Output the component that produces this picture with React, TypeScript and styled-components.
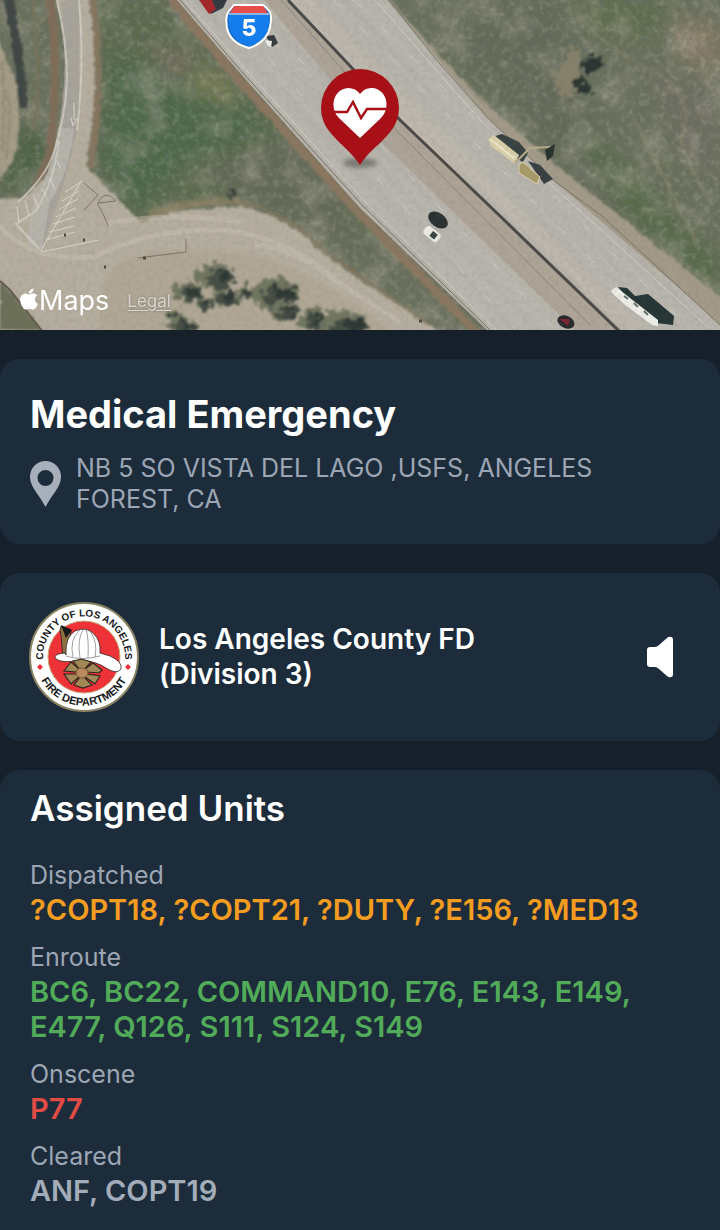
import React from "react";
import styled, { createGlobalStyle } from "styled-components";
import { FaApple } from "react-icons/fa";

const GlobalStyle = createGlobalStyle`
  *, *::before, *::after { box-sizing: border-box; }
  body {
    margin: 0;
    background: #15202b;
    color: #ffffff;
    font-family: Inter, "Liberation Sans", sans-serif;
  }
`;

const Page = styled.main`
  display: flex;
  flex-direction: column;
  min-height: 100vh;
`;

const MapPanel = styled.section`
  position: relative;
  height: 330px;
  margin-bottom: 29px;
  overflow: hidden;
`;

const MapArt = styled.svg`
  display: block;
  width: 100%;
  height: 100%;
`;

const Attribution = styled.div`
  position: absolute;
  left: 19px;
  bottom: 14px;
  display: flex;
  align-items: center;
  gap: 18px;
  line-height: 30px;
`;

const MapsBrand = styled.span`
  display: flex;
  align-items: center;
  font-size: 27px;

  svg {
    width: 20px;
    height: 24px;
    margin-bottom: 4px;
  }
`;

const LegalLink = styled.a`
  color: #dad6cf;
  font-size: 17px;
  text-shadow: 0 0 2px #6c6860;
  text-underline-offset: 3px;
`;

const Cards = styled.div`
  display: flex;
  flex: 1;
  flex-direction: column;
  gap: 29px;
`;

const Card = styled.section`
  padding: 31px 30px 29px;
  border-radius: 20px;
  background: #1c2c3b;
`;

const AgencyCard = styled(Card)`
  display: flex;
  align-items: center;
  gap: 20px;
  padding: 29px;
`;

const UnitsCard = styled(Card)`
  flex: 1;
  padding: 17px 30px 19px;
  border-radius: 20px 20px 0 0;
`;

const Title = styled.h1`
  margin: 0 0 15px;
  font-size: 38px;
  font-weight: 700;
  line-height: 48px;
`;

const Address = styled.div`
  display: flex;
  align-items: center;
  gap: 15px;
  color: #9ca6b4;
  font-size: 25px;
  font-weight: 400;
  line-height: 31px;

  svg {
    flex: none;
  }
`;

const Badge = styled.svg`
  flex: none;
  width: 110px;
  height: 110px;
`;

const AgencyName = styled.h2`
  flex: 1;
  max-width: 380px;
  margin: 0;
  font-size: 28px;
  font-weight: 600;
  line-height: 35px;
`;

const SoundButton = styled.button`
  display: flex;
  margin: 0 17px 0 auto;
  padding: 0;
  border: 0;
  background: none;
  color: #ffffff;
`;

const UnitsTitle = styled.h2`
  margin: 0 0 29px;
  font-size: 35px;
  font-weight: 600;
  line-height: 42px;
`;

const Groups = styled.dl`
  display: flex;
  flex-direction: column;
  gap: 13px;
  margin: 0;
`;

const StatusLabel = styled.dt`
  color: #9ca6b4;
  font-size: 25px;
  line-height: 34px;
`;

const UnitList = styled.dd<{ $color: string }>`
  margin: 0;
  color: ${({ $color }) => $color};
  font-size: 29px;
  font-weight: 600;
  line-height: 35px;
`;

const groups = [
  { status: "Dispatched", color: "#f59d20", units: "?COPT18, ?COPT21, ?DUTY, ?E156, ?MED13" },
  { status: "Enroute", color: "#51ab58", units: "BC6, BC22, COMMAND10, E76, E143, E149, E477, Q126, S111, S124, S149" },
  { status: "Onscene", color: "#e34b45", units: "P77" },
  { status: "Cleared", color: "#a3acb9", units: "ANF, COPT19" },
];

const Bush = ({ x, y, r }: { x: number; y: number; r: number }) => (
  <g>
    <ellipse cx={x} cy={y} rx={r} ry={r * 0.7} fill="#717660" />
    <ellipse cx={x + r * 0.2} cy={y + r * 0.1} rx={r * 0.75} ry={r * 0.5} fill="#444d44" />
    <ellipse cx={x + r * 0.4} cy={y - r * 0.1} rx={r * 0.4} ry={r * 0.3} fill="#2e3836" />
  </g>
);

function SatelliteMap() {
  return (
    <MapArt viewBox="0 0 720 330" preserveAspectRatio="xMidYMid slice" role="img" aria-label="Satellite map of Interstate 5">
      <defs>
        <filter id="rough" x="0" y="0" width="100%" height="100%">
          <feTurbulence type="fractalNoise" baseFrequency="0.16" numOctaves="3" seed="4" result="n" />
          <feDisplacementMap in="SourceGraphic" in2="n" scale="6" xChannelSelector="R" yChannelSelector="G" />
          <feGaussianBlur stdDeviation="0.8" />
        </filter>
        <filter id="foliage" x="-10%" y="-10%" width="120%" height="120%">
          <feTurbulence type="fractalNoise" baseFrequency="0.14" numOctaves="3" seed="9" result="n" />
          <feDisplacementMap in="SourceGraphic" in2="n" scale="18" xChannelSelector="R" yChannelSelector="G" />
          <feGaussianBlur stdDeviation="0.8" />
        </filter>
        <filter id="soft" x="-10%" y="-10%" width="120%" height="120%"><feGaussianBlur stdDeviation="9" /></filter>
        <filter id="edge" x="-10%" y="-10%" width="120%" height="120%"><feGaussianBlur stdDeviation="0.6" /></filter>
        <filter id="shade" x="-50%" y="-50%" width="200%" height="200%"><feGaussianBlur stdDeviation="2" /></filter>
        <filter id="grain" x="0" y="0" width="100%" height="100%">
          <feTurbulence type="fractalNoise" baseFrequency="0.22" numOctaves="3" seed="8" />
          <feColorMatrix type="matrix" values="0 0 0 0 0.14  0 0 0 0 0.16  0 0 0 0 0.14  2.2 0 0 0 -0.95" />
        </filter>
        <filter id="light" x="0" y="0" width="100%" height="100%">
          <feTurbulence type="fractalNoise" baseFrequency="0.15" numOctaves="3" seed="23" />
          <feColorMatrix type="matrix" values="0 0 0 0 0.75  0 0 0 0 0.74  0 0 0 0 0.6  0 2.2 0 0 -1.05" />
        </filter>
        <filter id="patches" x="0" y="0" width="100%" height="100%">
          <feTurbulence type="fractalNoise" baseFrequency="0.03" numOctaves="4" seed="12" />
          <feColorMatrix type="matrix" values="0 0 0 0 0.5  0 0 0 0 0.44  0 0 0 0 0.37  3 0 0 0 -1.4" />
        </filter>
        <filter id="streaks" x="0" y="0" width="100%" height="100%">
          <feTurbulence type="fractalNoise" baseFrequency="0.004 0.1" numOctaves="3" seed="5" />
          <feColorMatrix type="matrix" values="0 0 0 0 0.4  0 0 0 0 0.38  0 0 0 0 0.35  2 0 0 0 -0.85" />
        </filter>
        <clipPath id="freewayClip"><path d="M177 0H390L487 117L553 180L693 300L720 325V330H487L360 208L240 73Z" /></clipPath>
      </defs>

      <rect width="720" height="330" fill="#69705b" />
      <g filter="url(#soft)">
        <path d="M95 0H160L290 140L330 230L240 200L140 220L95 165Z" fill="#5b6b4d" />
        <path d="M110 60L220 75L270 130L190 165L130 215L100 160Z" fill="#4e6848" />
        <path d="M150 45L195 55L175 85Z" fill="#756c5d" />
        <path d="M180 70L225 75L240 105L200 95Z" fill="#7a7e55" />
        <path d="M200 170L290 140L390 270L340 240Z" fill="#646957" />
        <path d="M24 120L50 140L30 190H0Z" fill="#4c6242" />
        <path d="M430 0L560 0L600 150L700 240V290L560 160L470 70Z" fill="#636b58" />
        <path d="M560 0H680L650 40L590 30Z" fill="#5f6d4e" />
        <path d="M670 20H720V80L680 60Z" fill="#857a66" />
        <path d="M640 60L720 90V190L680 150Z" fill="#6e6e60" />
        <path d="M560 110L640 180L720 260V310L620 210Z" fill="#566a4a" />
      </g>
      <rect width="720" height="330" filter="url(#patches)" opacity="0.35" />
      <rect width="720" height="330" filter="url(#grain)" opacity="0.55" />
      <rect width="720" height="330" filter="url(#light)" opacity="0.22" />
      <path d="M575 10Q600 45 650 70T680 140Q690 165 705 195M630 110Q670 190 700 250" fill="none" stroke="#9a9177" strokeWidth="2" opacity=".5" filter="url(#rough)" />

      <g filter="url(#rough)">
        <path d="M-4 30L4 55L16 80L20 125L14 160L-4 185Z" fill="#a59c87" />
        <path d="M8 90Q12 120 6 160M2 60Q6 100 2 150" fill="none" stroke="#8f8672" strokeWidth="2" />
        <path d="M8 -4L14 30L20 70L24 108" fill="none" stroke="#3f4644" strokeWidth="9" />
        <path d="M32 -4Q42 80 34 130" fill="none" stroke="#77735c" strokeWidth="3" />
        <path d="M50 -4Q60 72 50 155L36 186" fill="none" stroke="#7f6d59" strokeWidth="8" />
        <path d="M92 -4Q103 80 91 168" fill="none" stroke="#857660" strokeWidth="8" />
        <path d="M-4 199L22 198Q52 180 60 136Q72 58 56 -4H88Q102 75 86 165L140 222Q174 207 240 207Q286 214 322 253L360 280L446 336H-4Z" fill="#b5ad9e" />
        <path d="M102 334Q88 278 130 257Q235 237 303 274L360 306L394 334Z" fill="#b1a796" />
        <path d="M140 220Q183 201 245 203Q292 216 328 254L388 296L430 326" fill="none" stroke="#8b7b61" strokeWidth="3" opacity=".7" />
        <path d="M150 214Q190 200 240 200" fill="none" stroke="#96886a" strokeWidth="8" opacity=".5" />
      </g>
      <g filter="url(#edge)">
        <path d="M70 0Q83 90 54 185L33 247" fill="none" stroke="#a5a39b" strokeWidth="18" opacity=".8" />
        <path d="M66 128Q62 170 42 200L34 247" fill="none" stroke="#c0bdb5" strokeWidth="16" opacity=".6" />
      </g>
      <path d="M57 0C72 65 69 105 54 152Q46 177 18 202M79 0Q85 65 77 130M59 141Q54 181 36 211L16 224L40 250" fill="none" stroke="#d2cec5" strokeWidth="2" opacity=".8" />
      <path d="M74 103V120M71 118L73 126L77 118M41 252L99 240M40 252L82 180M65 192L81 182M62 201L79 191M59 209L78 199M56 217L76 208M53 224L75 217M49 232L74 226M46 240L75 232M17 207L19 222M25 200L29 215M33 194L38 207M42 188L47 199M50 178L55 190M57 160L60 168" fill="none" stroke="#dad6ce" strokeWidth="1" />
      <g filter="url(#edge)">
        <path d="M0 226Q30 262 95 257Q145 229 220 230Q285 235 340 283M105 224Q168 211 240 222M255 244Q300 252 330 277L400 322" fill="none" stroke="#cbc3b5" strokeWidth="5" opacity=".4" />
        <path d="M84 183L98 195L84 210M97 203L104 216L108 226M138 258L186 252V239M98 203Q105 188 116 201L98 203" fill="none" stroke="#7c7469" strokeWidth="1" />
      </g>
      <path d="M83 240h2M104 267h2M143 258h3M64 235h2M419 321h3" stroke="#4d4741" strokeWidth="3" />
      <path d="M0 282L12 293L42 330H0Z" fill="#6c7058" filter="url(#rough)" />
      <path d="M0 281L10 290L42 331" fill="none" stroke="#615c50" strokeWidth="2" />

      <path d="M387 -2L480 98L556 165L650 240L724 300V330H690L553 185L485 120L378 0Z" fill="#a39a89" filter="url(#rough)" />
      <path d="M169 -4L240 81L360 214L480 336" fill="none" stroke="#8b7760" strokeWidth="9" filter="url(#rough)" />
      <path d="M177 0H387L487 117L553 180L693 300L720 325V330H487L360 208L240 73Z" fill="#b9b6ae" />
      <path d="M264 0H288L400 120L622 330H575L386 147Z" fill="#aea497" />
      <path d="M290 0H315L490 180L650 330H626L400 119Z" fill="#beb8ae" />
      <g clipPath="url(#freewayClip)">
        <rect x="0" y="-350" width="900" height="600" transform="rotate(46 200 0)" filter="url(#streaks)" opacity=".4" />
      </g>
      <g filter="url(#edge)">
        <path d="M288 0L352 68L400 120L500 216L620 332" fill="none" stroke="#4b4a47" strokeWidth="3" />
        <path d="M281 0L350 78L400 134L590 325" fill="none" stroke="#8d867c" strokeWidth="1" />
        <path d="M180 0L243 73L363 206L490 330M389 0L434 57L487 117L553 180L602 216L693 300L720 325" fill="none" stroke="#7a7365" strokeWidth="1" />
        <path d="M184 0L247 71L367 204L496 330M375 0L480 120L710 329" fill="none" stroke="#d0ccc4" strokeWidth="1" />
      </g>
      <path d="M215 0L515 329M243 0L555 329M333 0L660 329M354 0L690 329" fill="none" stroke="#dedbd4" strokeWidth="1" strokeDasharray="10 30" opacity=".6" />

      <g filter="url(#edge)">
        <path d="M206 0L211 14L223 8L227 0Z" fill="#303b43" /><path d="M199 0L209 14L216 9L212 0Z" fill="#a3252b" />
        <path d="M266 36L274 35L278 43L272 47Z" fill="#353b3c" /><path d="M265 40L272 41L271 47L267 45Z" fill="#ecece8" />
        <ellipse cx="438" cy="220" rx="11" ry="7" transform="rotate(35 438 220)" fill="#293333" />
        <g transform="translate(432 234) rotate(38)"><rect x="-9" y="-5" width="18" height="10" rx="4" fill="#ecebe5" /><path d="M-1 -3L5 -3V3L-1 3Z" fill="#38443f" /></g>
        <path d="M495 136L502 134L519 142L528 153L523 162L511 156Z" fill="#394343" />
        <path d="M528 161L540 165L553 179L544 184Z" fill="#374043" />
        <path d="M488 139L494 135L519 155L515 164L491 146Z" fill="#d8cfaa" /><path d="M490 139L515 159" stroke="#eee5c8" strokeWidth="2" />
        <path d="M519 165L523 162L540 177L537 184L519 173Z" fill="#a79b67" stroke="#ddd2ab" strokeWidth="1" />
        <path d="M515 163L530 148L551 147" stroke="#b7ac8b" strokeWidth="2" fill="none" /><path d="M545 150L555 144L553 156L547 161Z" fill="#29312e" />
        <path d="M618 287L627 288L635 296L648 294L674 316L673 325L656 323L632 303Z" fill="#273436" />
        <path d="M612 290L616 287L658 320L658 326L652 325L624 304L611 292Z" fill="#eeeee8" /><path d="M624 296L628 299M634 303L638 307M644 311L648 315" stroke="#626f69" strokeWidth="2" />
        <ellipse cx="566" cy="322" rx="9" ry="6" transform="rotate(25 566 322)" fill="#29292d" /><path d="M559 319L570 319L568 326Z" fill="#7a2632" />
      </g>
      <g filter="url(#foliage)">
        <path d="M568 52Q574 44 582 54L579 75L571 97L556 91L554 77Z" fill="#85816a" />
        <path d="M583 58L603 56L604 64L595 73L582 71ZM574 84L582 77L592 90L590 94L575 94Z" fill="#2b3432" />
        <Bush x={188} y={292} r={15} /><Bush x={216} y={277} r={19} /><Bush x={224} y={298} r={13} />
        <Bush x={244} y={293} r={9} /><Bush x={275} y={295} r={24} /><Bush x={285} y={311} r={14} />
        <Bush x={314} y={320} r={16} /><Bush x={345} y={327} r={24} /><Bush x={182} y={326} r={14} />
        <Bush x={173} y={315} r={7} /><Bush x={205} y={304} r={10} /><Bush x={231} y={193} r={8} />
      </g>
      <rect width="720" height="330" filter="url(#grain)" opacity="0.12" />

      <path d="M234 5H263Q266 7 270 12Q272 17 270 27Q267 42 249 48Q230 43 227 28Q225 16 229 11Z" fill="#176cc5" stroke="#fff" strokeWidth="2" />
      <path d="M234 6H263L268 13H230Z" fill="#e74d4a" />
      <path d="M229 15H269Q272 39 249 46Q226 39 229 15Z" fill="#147ceb" />
      <path d="M229 14H269" stroke="#fff" strokeWidth="1" />
      <text x="249" y="36" textAnchor="middle" fill="#fff" fontFamily="Inter, sans-serif" fontWeight="800" fontSize="23">5</text>

      <ellipse cx="360" cy="163" rx="17" ry="5" fill="#555451" opacity=".6" filter="url(#shade)" />
      <path d="M360 165Q354 156 341 144C330 133 321 124 321 108A39 39 0 0 1 399 108C399 124 390 133 379 144Q366 155 360 165Z" fill="#a61016" />
      <path d="M360 138L339 118C329 108 333 89 348 88Q356 88 360 94Q365 87 373 88C387 90 391 108 381 118Z" fill="#fff" />
      <path d="M334 112H347L353 102L361 118L367 109H387" fill="none" stroke="#a61016" strokeWidth="2.4" />
    </MapArt>
  );
}

function FireBadge() {
  return (
    <Badge viewBox="0 0 110 110" role="img" aria-label="County of Los Angeles Fire Department">
      <defs>
        <path id="upperArc" d="M16 68A41 41 0 1 1 94 68" />
        <path id="lowerArc" d="M7 62A48.5 48.5 0 0 0 103 62" />
      </defs>
      <circle cx="55" cy="55" r="54" fill="#fff" stroke="#8a8262" strokeWidth="2" />
      <circle cx="55" cy="55" r="36" fill="#ed3238" stroke="#c8a87b" strokeWidth="1" />
      <g fill="#17191b" fontFamily="Liberation Sans, sans-serif" fontWeight="700" textAnchor="middle">
        <text fontSize="10"><textPath href="#upperArc" startOffset="50%">COUNTY OF LOS ANGELES</textPath></text>
        <text fontSize="11"><textPath href="#lowerArc" startOffset="50%">FIRE DEPARTMENT</textPath></text>
      </g>
      <path d="M11 62L14 65L11 68L8 65ZM99 62L102 65L99 68L96 65Z" fill="#ed3238" />
      <path d="M34 56L32 33Q30 28 32 24L42 28L39 55Z" fill="#8d7141" stroke="#21211d" strokeWidth="0.8" />
      <path d="M32 23L43 28L37 36Z" fill="#17191b" />
      <path d="M37 53Q36 35 46 29Q57 24 65 32Q72 39 71 51L81 54Q94 60 92 67Q88 73 77 66Q69 60 52 58Q34 62 27 57Q23 52 36 51Z" fill="#fff" stroke="#292522" strokeWidth="0.8" />
      <path d="M37 54Q52 59 71 54M44 55Q40 37 51 28M51 56Q48 37 54 28M59 56Q60 35 57 28M66 55Q69 40 61 29" stroke="#777" strokeWidth="0.7" fill="none" />
      <g fill="#a18856" stroke="#2e2820" strokeWidth="1.2">
        <path d="M44 59L53 57L62 60L55 68H51Z" />
        <path d="M64 61L73 68L70 71L58 70L56 67Z" />
        <path d="M71 74L66 82L56 75L58 72Z" />
        <path d="M63 83L54 86L45 83L51 75H55Z" />
        <path d="M42 82L35 72L48 72L50 75Z" />
        <path d="M35 69L42 60L50 67L48 70Z" />
      </g>
      <ellipse cx="53" cy="71" rx="6" ry="5" fill="#b88a5d" stroke="#7b593b" strokeWidth="1" />
    </Badge>
  );
}

export default function App() {
  return (
    <>
      <GlobalStyle />
      <Page>
        <MapPanel>
          <SatelliteMap />
          <Attribution>
            <MapsBrand><FaApple aria-hidden="true" />Maps</MapsBrand>
            <LegalLink href="#legal">Legal</LegalLink>
          </Attribution>
        </MapPanel>
        <Cards>
          <Card>
            <Title>Medical Emergency</Title>
            <Address>
              <svg width="31" height="46" viewBox="0 0 31 46" aria-hidden="true">
                <path fillRule="evenodd" fill="#a7afba" d="M15.5 0A15.5 15.5 0 0 0 0 16C0 26 9 33 15.5 46C22 33 31 26 31 16A15.5 15.5 0 0 0 15.5 0ZM15.5 9A8 8 0 1 1 15.5 25A8 8 0 0 1 15.5 9Z" />
              </svg>
              <span>NB 5 SO VISTA DEL LAGO ,USFS, ANGELES FOREST, CA</span>
            </Address>
          </Card>
          <AgencyCard>
            <FireBadge />
            <AgencyName>Los Angeles County FD (Division 3)</AgencyName>
            <SoundButton type="button" aria-label="Play audio">
              <svg width="28" height="42" viewBox="0 0 28 42" aria-hidden="true">
                <path fill="currentColor" d="M4 11H9Q11 11 13 9L21 2Q23 0 25 1Q27 1 27 4V38Q27 41 25 41Q23 42 21 40L13 33Q11 31 9 31H4Q1 31 1 28V14Q1 11 4 11Z" />
              </svg>
            </SoundButton>
          </AgencyCard>
          <UnitsCard>
            <UnitsTitle>Assigned Units</UnitsTitle>
            <Groups>
              {groups.map((g) => (
                <div key={g.status}>
                  <StatusLabel>{g.status}</StatusLabel>
                  <UnitList $color={g.color}>{g.units}</UnitList>
                </div>
              ))}
            </Groups>
          </UnitsCard>
        </Cards>
      </Page>
    </>
  );
}
